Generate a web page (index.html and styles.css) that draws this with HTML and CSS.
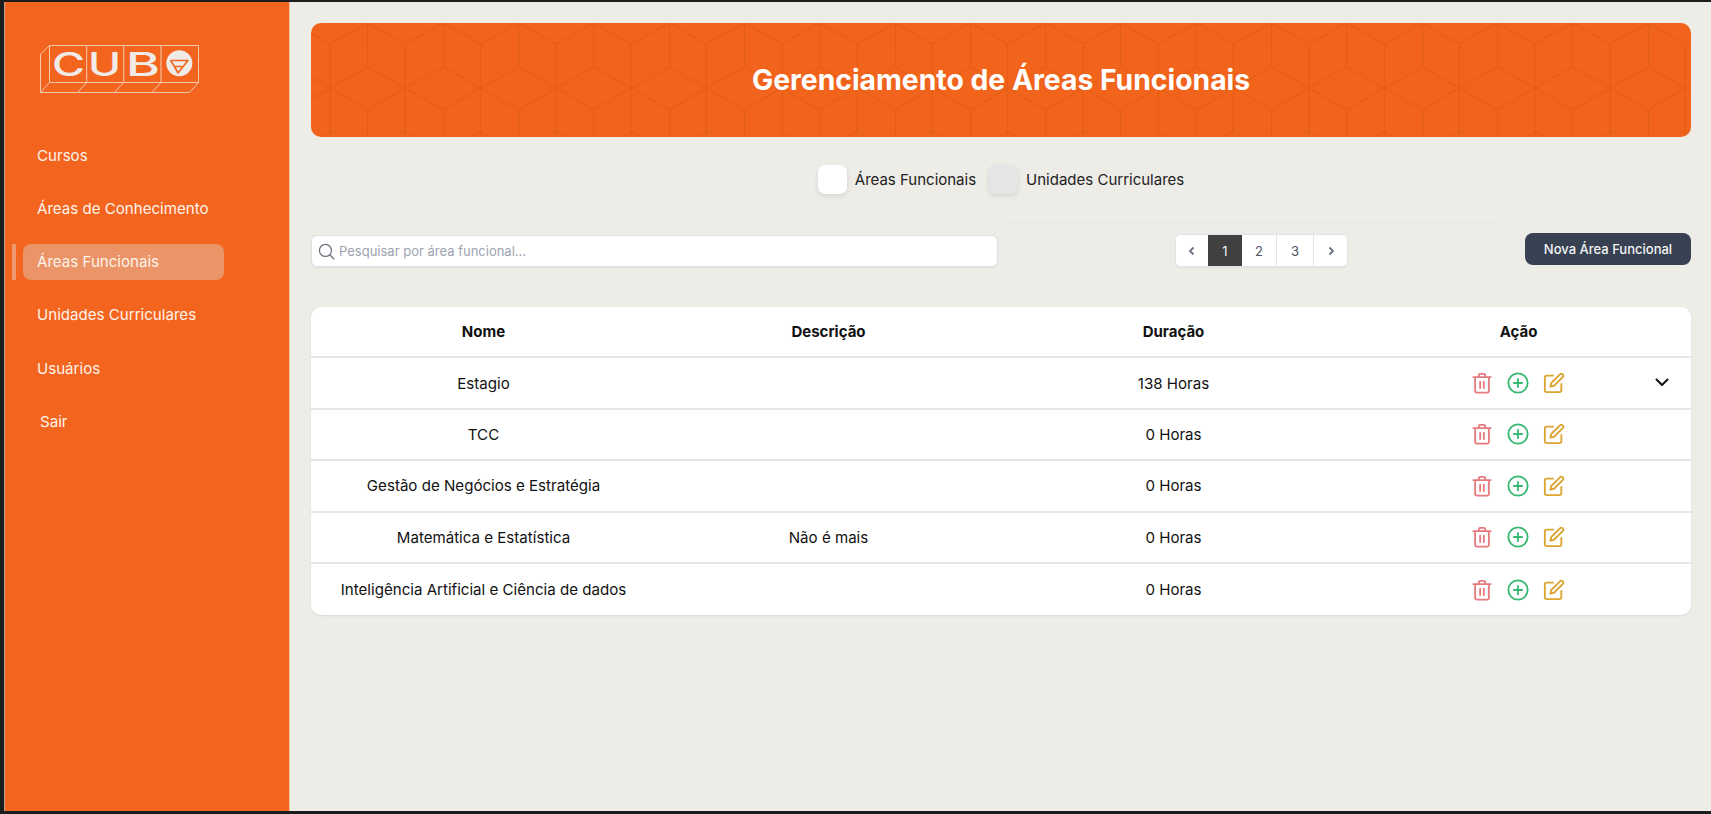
FILE: index.html
```html
<!DOCTYPE html>
<html lang="en">
<head>
  <meta charset="UTF-8" />
  <meta name="viewport" content="width=device-width, initial-scale=1.0">
  <title>Gerenciamento de Áreas Funcionais</title>
  <link rel="stylesheet" href="styles.css">
</head>
<body>
  <div class="app">
    <aside class="sidebar">
      <svg class="logo" width="170" height="56" viewBox="30 40 170 56" fill="none">
        <g class="logo-lines">
          <path d="M49.5 45.5H198.5V82.5H49.5ZM86.7 45.5V82.5M123.7 45.5V82.5M161 45.5V82.5" />
          <path d="M40.5 54L49.5 45.5M40.5 54V92.5H189.5L198.5 82.5M40.5 92.5L49.5 82.5M77.5 92.5L86.7 82.5M114.5 92.5L123.7 82.5M152 92.5L161 82.5" />
        </g>
        <text class="logo-text" x="52" y="76" textLength="33" lengthAdjust="spacingAndGlyphs">C</text>
        <text class="logo-text" x="88" y="76" textLength="33" lengthAdjust="spacingAndGlyphs">U</text>
        <text class="logo-text" x="126" y="76" textLength="34" lengthAdjust="spacingAndGlyphs">B</text>
        <circle cx="179.3" cy="63.3" r="13" fill="#f0ebe6" />
        <path class="logo-mark" d="M170.5 60.5H188L178 73L174.5 66.5H182" />
        <path class="logo-mark" d="M170.5 60.5L174.5 66.5" />
      </svg>

      <nav class="nav">
        <a class="nav-item">Cursos</a>
        <a class="nav-item">Áreas de Conhecimento</a>
        <a class="nav-item active">Áreas Funcionais</a>
        <a class="nav-item">Unidades Curriculares</a>
        <a class="nav-item">Usuários</a>
        <a class="nav-item sair">Sair</a>
      </nav>
    </aside>

    <main class="main">
      <div class="banner">
        <h1>Gerenciamento de Áreas Funcionais</h1>
      </div>

      <div class="tabs">
        <div class="tab"><span class="tab-box on"></span>Áreas Funcionais</div>
        <div class="tab"><span class="tab-box"></span>Unidades Curriculares</div>
      </div>

      <div class="divider"></div>

      <div class="toolbar">
        <div class="search">
          <svg width="17" height="17" viewBox="0 0 24 24" fill="none" stroke="#6b7280" stroke-width="1.8" stroke-linecap="round"><circle cx="10.5" cy="10.5" r="8.5" /><path d="M17 17l5.5 5.5" /></svg>
          <input type="text" placeholder="Pesquisar por área funcional..." />
        </div>

        <div class="pager">
          <button class="page"><svg width="12" height="12" viewBox="0 0 12 12" fill="none" stroke="#6b7280" stroke-width="1.8"><path d="M7.5 2.5L4 6l3.5 3.5" /></svg></button>
          <button class="page current">1</button>
          <button class="page">2</button>
          <button class="page">3</button>
          <button class="page"><svg width="12" height="12" viewBox="0 0 12 12" fill="none" stroke="#6b7280" stroke-width="1.8"><path d="M4.5 2.5L8 6l-3.5 3.5" /></svg></button>
        </div>

        <button class="new-btn">Nova Área Funcional</button>
      </div>

      <div class="table">
        <div class="row head">
          <div>Nome</div>
          <div>Descrição</div>
          <div>Duração</div>
          <div>Ação</div>
        </div>

        <div class="row">
          <div>Estagio</div>
          <div></div>
          <div>138 Horas</div>
          <div class="actions">
            <svg class="icon trash" viewBox="0 0 24 24"><use href="#i-trash" /></svg>
            <svg class="icon plus" viewBox="0 0 24 24"><use href="#i-plus" /></svg>
            <svg class="icon edit" viewBox="0 0 24 24"><use href="#i-edit" /></svg>
          </div>
          <svg class="more" width="20" height="20" viewBox="0 0 20 20" fill="none" stroke="#111" stroke-width="2" stroke-linecap="round" stroke-linejoin="round"><path d="M4.5 7.5L10 13l5.5-5.5" /></svg>
        </div>

        <div class="row">
          <div>TCC</div>
          <div></div>
          <div>0 Horas</div>
          <div class="actions">
            <svg class="icon trash" viewBox="0 0 24 24"><use href="#i-trash" /></svg>
            <svg class="icon plus" viewBox="0 0 24 24"><use href="#i-plus" /></svg>
            <svg class="icon edit" viewBox="0 0 24 24"><use href="#i-edit" /></svg>
          </div>
        </div>

        <div class="row">
          <div>Gestão de Negócios e Estratégia</div>
          <div></div>
          <div>0 Horas</div>
          <div class="actions">
            <svg class="icon trash" viewBox="0 0 24 24"><use href="#i-trash" /></svg>
            <svg class="icon plus" viewBox="0 0 24 24"><use href="#i-plus" /></svg>
            <svg class="icon edit" viewBox="0 0 24 24"><use href="#i-edit" /></svg>
          </div>
        </div>

        <div class="row">
          <div>Matemática e Estatística</div>
          <div>Não é mais</div>
          <div>0 Horas</div>
          <div class="actions">
            <svg class="icon trash" viewBox="0 0 24 24"><use href="#i-trash" /></svg>
            <svg class="icon plus" viewBox="0 0 24 24"><use href="#i-plus" /></svg>
            <svg class="icon edit" viewBox="0 0 24 24"><use href="#i-edit" /></svg>
          </div>
        </div>

        <div class="row">
          <div>Inteligência Artificial e Ciência de dados</div>
          <div></div>
          <div>0 Horas</div>
          <div class="actions">
            <svg class="icon trash" viewBox="0 0 24 24"><use href="#i-trash" /></svg>
            <svg class="icon plus" viewBox="0 0 24 24"><use href="#i-plus" /></svg>
            <svg class="icon edit" viewBox="0 0 24 24"><use href="#i-edit" /></svg>
          </div>
        </div>
      </div>
    </main>
  </div>

  <svg class="defs" width="0" height="0">
    <symbol id="i-trash" viewBox="0 0 24 24">
      <path d="M2.5 5.5H21.5M8.5 5.5V3.5A1.5 1.5 0 0 1 10 2H14A1.5 1.5 0 0 1 15.5 3.5V5.5M4.5 5.5V20.5A2 2 0 0 0 6.5 22.5H17.5A2 2 0 0 0 19.5 20.5V5.5M10 10.5V17.5M14 10.5V17.5" />
    </symbol>
    <symbol id="i-plus" viewBox="0 0 24 24">
      <circle cx="12" cy="12" r="10.5" />
      <path d="M12 7.5V16.5M7.5 12H16.5" />
    </symbol>
    <symbol id="i-edit" viewBox="0 0 24 24">
      <path d="M11 4H4A2 2 0 0 0 2 6V20A2 2 0 0 0 4 22H18A2 2 0 0 0 20 20V13" />
      <path d="M18.5 2.5A2.1 2.1 0 0 1 21.5 5.5L12 15L8 16L9 12Z" />
    </symbol>
  </svg>
</body>
</html>
```

FILE: styles.css
```css
* {
  box-sizing: border-box;
}

html, body {
  height: 100%;
}

body {
  margin: 0;
  background: #1b1d1d;
  color: #111;
  font-family: Inter, "Noto Sans", sans-serif;
  overflow: hidden;
}

.app {
  display: flex;
  height: 100%;
  padding-top: 2px;
  padding-bottom: 3px;
  padding-left: 4px;
}

.sidebar {
  width: 286px;
  flex-shrink: 0;
  background: #f3641f;
  border-left: 1px solid #b9a08f;
  border-right: 1px solid #f2c4a8;
  color: #fff3ea;
}

.logo {
  display: block;
  margin: 38px 0 0 25px;
}

.logo-lines path {
  stroke: #f5c9ad;
  stroke-width: 1;
}

.logo-text {
  font-size: 32px;
  font-weight: 500;
  fill: #f0ebe6;
}

.logo-mark {
  stroke: #f3641f;
  stroke-width: 1.6;
  stroke-linejoin: round;
}

.nav {
  margin-top: 41px;
  display: flex;
  flex-direction: column;
  gap: 17.3px;
  padding-left: 18px;
  width: 219px;
}

.nav-item {
  display: flex;
  align-items: center;
  height: 36px;
  padding-left: 14px;
  font-size: 15.1px;
  border-radius: 8px;
  position: relative;
}

.nav-item.active {
  background: #ea9468;
}

.nav-item.active::before {
  content: "";
  position: absolute;
  left: -11px;
  top: 0;
  bottom: 0;
  width: 4px;
  background: #ee9a70;
}

.nav-item.sair {
  padding-left: 17px;
}

.main {
  flex: 1;
  min-width: 0;
  background: #edece7;
  padding: 21px 20px 0 21px;
}

.banner {
  height: 114px;
  border-radius: 10px;
  background-color: #f2641c;
  background-image: url("data:image/svg+xml,%3Csvg xmlns='http://www.w3.org/2000/svg' width='75.3' height='114'%3E%3Cg fill='none' stroke='%23e35f14' stroke-width='1.3'%3E%3Cpath d='M57 0L19 21V114M57 0L94.3 21M-18.3 0L19 21M57 0V44M57 44L19 65M57 44L94.3 65M-18.3 44L19 65L57 87L94.3 65M-18.3 87L19 65M57 87V114M19 108L10 114M19 108L28 114'/%3E%3C/g%3E%3C/svg%3E");
  background-repeat: repeat-x;
  display: flex;
  align-items: center;
  justify-content: center;
}

.banner h1 {
  margin: 0;
  color: #fff;
  font-size: 28.3px;
  font-weight: 700;
}

.tabs {
  display: flex;
  justify-content: center;
  gap: 13px;
  margin-top: 28px;
}

.tab {
  display: flex;
  align-items: center;
  gap: 8px;
  font-size: 15px;
  color: #222;
}

.tab-box {
  width: 29px;
  height: 29px;
  border-radius: 7px;
  background: #e5e5e5;
  box-shadow: 0 2px 5px rgba(0, 0, 0, 0.1);
}

.tab-box.on {
  background: #fff;
}

.divider {
  width: 495px;
  height: 1px;
  margin: 28px 0 0 693px;
  background: #e4e4e8;
}

.toolbar {
  display: flex;
  align-items: flex-start;
  margin-top: 10px;
}

.search {
  display: flex;
  align-items: center;
  gap: 4px;
  width: 687px;
  height: 32px;
  margin-top: 2px;
  padding-left: 6px;
  background: #fff;
  border: 1px solid #dfe0e4;
  border-radius: 6px;
  box-shadow: 0 1px 2px rgba(0, 0, 0, 0.05);
}

.search input {
  flex: 1;
  border: none;
  outline: none;
  padding: 0;
  font-family: inherit;
  font-size: 13px;
}

.search input::placeholder {
  color: #9ca3af;
}

.pager {
  display: flex;
  height: 33px;
  margin: 1px 0 0 177px;
  background: #fff;
  border: 1px solid #e2e3e7;
  border-radius: 6px;
  overflow: hidden;
  box-shadow: 0 1px 2px rgba(0, 0, 0, 0.05);
}

.page {
  display: flex;
  align-items: center;
  justify-content: center;
  width: 35px;
  border: none;
  border-right: 1px solid #e2e3e7;
  background: #fff;
  color: #4b5563;
  font-family: inherit;
  font-size: 13px;
  padding: 0;
}

.page:nth-child(4) {
  width: 37px;
}

.page:last-child {
  width: 33px;
  border-right: none;
}

.page:first-child {
  width: 32px;
  border-right: none;
}

.page.current {
  width: 34px;
  background: #404040;
  color: #f2f2f2;
  border-right: none;
}

.new-btn {
  width: 166px;
  height: 32px;
  margin-left: auto;
  background: #374151;
  color: #f3f4f6;
  border: none;
  border-radius: 8px;
  font-family: inherit;
  font-size: 13px;
  font-weight: 500;
}

.table {
  margin-top: 40px;
  background: #fff;
  border-radius: 10px;
  overflow: hidden;
  box-shadow: 0 1px 2px rgba(0, 0, 0, 0.08);
}

.row {
  position: relative;
  display: grid;
  grid-template-columns: repeat(4, 1fr);
  align-items: center;
  height: 51.4px;
  border-bottom: 2px solid #e5e5ea;
  font-size: 15.1px;
  text-align: center;
}

.row:last-child {
  border-bottom: none;
}

.row.head {
  font-weight: 700;
  font-size: 15px;
}

.actions {
  display: flex;
  justify-content: center;
  gap: 14px;
  padding-right: 2px;
}

.icon {
  width: 22px;
  height: 22px;
  fill: none;
  stroke-width: 2;
  stroke-linecap: round;
  stroke-linejoin: round;
}

.trash {
  stroke: #e57b7f;
}

.plus {
  stroke: #38b871;
}

.edit {
  stroke: #dca52f;
}

.more {
  position: absolute;
  right: 19px;
  top: 14px;
}

.defs {
  position: absolute;
}
```
